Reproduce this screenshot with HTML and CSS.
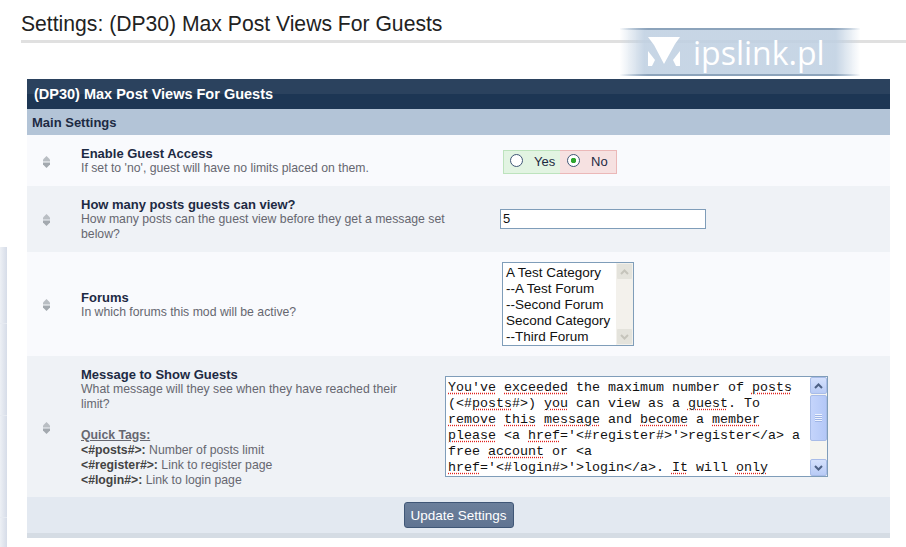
FILE: index.html
```html
<!DOCTYPE html>
<html lang="en">
<head>
    <meta charset="UTF-8">
    <title>Settings: (DP30) Max Post Views For Guests</title>
    <link rel="stylesheet" href="styles.css">
</head>
<body>
    <div class="side-panel"></div>

    <!-- watermark -->
    <div class="watermark">
        <svg class="watermark-logo" width="32" height="30" viewBox="0 0 32 30">
            <path d="M0 0H32L27 7L16 27L6 8Z" fill="#fff"/>
            <path d="M0 14L7 23L4 29H0Z" fill="#fff"/>
            <path d="M32 14L25 23L28 29H32Z" fill="#fff"/>
        </svg>
        <span>ipslink.pl</span>
    </div>

    <h1 class="page-title">Settings: (DP30) Max Post Views For Guests</h1>

    <form class="settings">
        <h2 class="settings-title">(DP30) Max Post Views For Guests</h2>
        <h3 class="settings-group">Main Settings</h3>

        <div class="row row-guest">
            <svg class="sort" width="9" height="14" viewBox="0 0 9 14"><path class="sort-up" d="M4.500 1L8 4.500V6.500H1V4.500Z"/><path class="sort-down" d="M1 7.500H8V9.500L4.500 13L1 9.500Z"/></svg>
            <div class="label">
                <strong>Enable Guest Access</strong>
                <p>If set to 'no', guest will have no limits placed on them.</p>
            </div>
            <div class="field">
                <div class="yesno">
                    <label class="yes"><span class="radio"></span>Yes</label>
                    <label class="no"><span class="radio checked"></span>No</label>
                </div>
            </div>
        </div>

        <div class="row row-alt row-posts">
            <svg class="sort" width="9" height="14" viewBox="0 0 9 14"><path class="sort-up" d="M4.500 1L8 4.500V6.500H1V4.500Z"/><path class="sort-down" d="M1 7.500H8V9.500L4.500 13L1 9.500Z"/></svg>
            <div class="label">
                <strong>How many posts guests can view?</strong>
                <p>How many posts can the guest view before they get a message set below?</p>
            </div>
            <div class="field">
                <div class="textbox">5</div>
            </div>
        </div>

        <div class="row row-forums">
            <svg class="sort" width="9" height="14" viewBox="0 0 9 14"><path class="sort-up" d="M4.500 1L8 4.500V6.500H1V4.500Z"/><path class="sort-down" d="M1 7.500H8V9.500L4.500 13L1 9.500Z"/></svg>
            <div class="label">
                <strong>Forums</strong>
                <p>In which forums this mod will be active?</p>
            </div>
            <div class="field">
                <div class="listbox">
                    <ul>
                        <li>A Test Category</li>
                        <li>--A Test Forum</li>
                        <li>--Second Forum</li>
                        <li>Second Category</li>
                        <li>--Third Forum</li>
                    </ul>
                    <div class="scroll scroll-off">
                        <span class="scroll-btn"><svg width="9" height="6" viewBox="0 0 9 6"><path d="M1 5L4.500 1.500L8 5" /></svg></span>
                        <span class="scroll-track"></span>
                        <span class="scroll-btn"><svg width="9" height="6" viewBox="0 0 9 6"><path d="M1 1L4.500 4.500L8 1" /></svg></span>
                    </div>
                </div>
            </div>
        </div>

        <div class="row row-alt row-message">
            <svg class="sort" width="9" height="14" viewBox="0 0 9 14"><path class="sort-up" d="M4.500 1L8 4.500V6.500H1V4.500Z"/><path class="sort-down" d="M1 7.500H8V9.500L4.500 13L1 9.500Z"/></svg>
            <div class="label">
                <strong>Message to Show Guests</strong>
                <p class="narrow">What message will they see when they have reached their limit?</p>
                <p class="tags">
                    <u class="tags-title">Quick Tags:</u><br>
                    <b>&lt;#posts#&gt;:</b> Number of posts limit<br>
                    <b>&lt;#register#&gt;:</b> Link to register page<br>
                    <b>&lt;#login#&gt;:</b> Link to login page
                </p>
            </div>
            <div class="field">
                <div class="memo">
                    <div class="memo-text">
                        <div><i>You've</i> <i>exceeded</i> the maximum number of <i>posts</i></div>
                        <div>(&lt;#<i>posts</i>#&gt;) <i>you</i> can view as a <i>guest</i>. To</div>
                        <div><i>remove</i> <i>this</i> <i>message</i> and <i>become</i> a <i>member</i></div>
                        <div><i>please</i> &lt;a <i>href</i>='&lt;#register#&gt;'&gt;register&lt;/a&gt; a</div>
                        <div>free <i>account</i> or &lt;a</div>
                        <div><i>href</i>='&lt;#login#&gt;'&gt;login&lt;/a&gt;. <i>It</i> will <i>only</i></div>
                    </div>
                    <div class="scroll scroll-on">
                        <span class="scroll-btn"><svg width="9" height="6" viewBox="0 0 9 6"><path d="M1 5L4.500 1.500L8 5" /></svg></span>
                        <span class="scroll-thumb"><span class="grip"></span></span>
                        <span class="scroll-track"></span>
                        <span class="scroll-btn"><svg width="9" height="6" viewBox="0 0 9 6"><path d="M1 1L4.500 4.500L8 1" /></svg></span>
                    </div>
                </div>
            </div>
        </div>

        <div class="actions">
            <button type="button" class="submit">Update Settings</button>
        </div>
    </form>
</body>
</html>
```

FILE: styles.css
```css
* {
    box-sizing: border-box;
}

body {
    margin: 0;
    height: 547px;
    overflow: hidden;
    background: #fff;
    font-family: "Liberation Sans", Arial, sans-serif;
    color: #1d2a43;
}

/* page heading */
.page-title {
    margin: 0 0 0 21px;
    height: 43px;
    padding-top: 12px;
    border-bottom: 3px solid #e0e0e0;
    font-size: 21.150px;
    line-height: 24px;
    font-weight: normal;
    color: #222;
}

.side-panel {
    position: absolute;
    left: 0;
    top: 247px;
    width: 7px;
    height: 300px;
    background:
        linear-gradient(#e6eaf1, #e6eaf1) 0 76px / 100% 1px no-repeat,
        linear-gradient(#e6eaf1, #e6eaf1) 0 168px / 100% 1px no-repeat,
        linear-gradient(#e6eaf1, #e6eaf1) 0 270px / 100% 1px no-repeat,
        linear-gradient(90deg, #edf0f5, #d6dce8);
}

.watermark {
    position: absolute;
    left: 620px;
    top: 28px;
    width: 240px;
    height: 48px;
    display: flex;
    align-items: center;
    padding-left: 28px;
    gap: 13px;
    background: linear-gradient(90deg, rgba(190, 207, 225, 0), rgba(190, 207, 225, 0.86) 10%, rgba(190, 207, 225, 0.86) 90%, rgba(190, 207, 225, 0));
    border-top: 2px solid;
    border-bottom: 2px solid;
    border-image: linear-gradient(90deg, rgba(140, 163, 187, 0), #8ca3bb 12%, #8ca3bb 88%, rgba(140, 163, 187, 0)) 1;
    color: #fff;
    font-family: "Open Sans", sans-serif;
    font-size: 32px;
}

.watermark-logo {
    flex: none;
}

/* settings block */
.settings {
    margin: 36px 16px 0 27px;
}

.settings-title {
    margin: 0;
    height: 30px;
    padding-left: 7px;
    background: linear-gradient(#2b425e 50%, #1d3654 50%);
    color: #fff;
    font-size: 14.500px;
    line-height: 30px;
}

.settings-group {
    margin: 0;
    height: 26px;
    padding-left: 5px;
    background: #b3c4d7;
    color: #1d2a43;
    font-size: 13px;
    line-height: 28px;
}

.row {
    display: grid;
    grid-template-columns: 54px 396px 1fr;
    align-items: center;
    background: #f9fafd;
}

.row-alt {
    background: #eff2f6;
}

.row-guest {
    height: 51px;
}

.row-posts {
    height: 66px;
}

.row-forums {
    height: 104px;
}

.row-message {
    height: 141px;
}

.sort {
    justify-self: start;
    margin: 2px 0 0 15px;
}

.sort-up {
    fill: #b9bec3;
}

.sort-down {
    fill: #a3a9af;
}

.label {
    padding-top: 1px;
    font-size: 12.250px;
    line-height: 15px;
    color: #666770;
}

.label strong {
    display: block;
    color: #1d2a43;
    font-size: 13px;
}

.label p {
    margin: 0;
    width: 375px;
}

.label .narrow {
    width: 330px;
}

.label .tags {
    margin-top: 16px;
}

.tags b {
    color: #444;
}

.tags-title {
    font-weight: bold;
    color: #666770;
}

.field {
    font-size: 12px;
}

/* yes / no */
.yesno {
    display: inline-flex;
    margin: 2px 0 0 26px;
    height: 24px;
    font-size: 13px;
    color: #1d2a43;
}

.yesno label {
    display: flex;
    align-items: center;
    border: 1px solid;
}

.yes {
    width: 57px;
    padding-left: 6px;
    gap: 11px;
    background: #e2f4e2;
    border-color: #bde3bd !important;
    border-right: 0 !important;
}

.no {
    width: 57px;
    padding-left: 7px;
    gap: 11px;
    background: #f6e1e1;
    border-color: #ebb8b8 !important;
    border-left: 0 !important;
}

.radio {
    width: 13px;
    height: 13px;
    margin-top: -3px;
    border: 1px solid #3f5676;
    border-radius: 50%;
    background: #fff;
}

.radio.checked {
    background: radial-gradient(circle, #2fa52f 2.500px, #fff 3px);
}

.textbox {
    margin-left: 23px;
    width: 206px;
    height: 20px;
    padding-left: 2px;
    background: #fff;
    border: 1px solid #7f9db9;
    font-size: 13px;
    line-height: 18px;
    color: #111;
}

.listbox {
    display: flex;
    margin-left: 25px;
    width: 132px;
    height: 84px;
    background: #fff;
    border: 1px solid #7f9db9;
}

.listbox ul {
    flex: 1;
    margin: 0;
    padding: 2px 0 0 3px;
    list-style: none;
    font-size: 13.500px;
    line-height: 16px;
    color: #111;
    white-space: nowrap;
}

/* scrollbars */
.scroll {
    display: flex;
    flex-direction: column;
    flex: none;
    width: 17px;
}

.scroll-btn {
    display: flex;
    align-items: center;
    justify-content: center;
    height: 17px;
    border-radius: 2px;
}

.scroll-btn svg {
    fill: none;
    stroke-width: 2;
}

.scroll-track {
    flex: 1;
}

.scroll-off {
    background: #f3f1ec;
}

.scroll-off .scroll-btn {
    background: #e4e3dc;
    border: 1px solid #f3f1ec;
}

.scroll-off svg {
    stroke: #c5c4bb;
}

.scroll-on {
    background: #f5f5f0;
}

.scroll-on .scroll-btn {
    background: linear-gradient(#d5e1fd, #b8cbf5);
    border: 1px solid #a8bce8;
}

.scroll-on svg {
    stroke: #4d6185;
}

.scroll-thumb {
    display: flex;
    align-items: center;
    justify-content: center;
    height: 46px;
    margin-top: 1px;
    border: 1px solid #a8bce8;
    border-radius: 2px;
    background: linear-gradient(90deg, #c4d4fb, #b4c8f7);
}

.grip {
    width: 7px;
    height: 8px;
    background: repeating-linear-gradient(#eef3fe 0 1px, #9fb5e6 1px 2px);
}

.memo {
    display: flex;
    margin-left: -32px;
    width: 383px;
    height: 101px;
    background: #fff;
    border: 1px solid #7f9db9;
}

.memo-text {
    flex: 1;
    padding: 3px 0 0 2px;
    font-family: "Liberation Mono", monospace;
    font-size: 13.330px;
    line-height: 16px;
    color: #111;
    white-space: nowrap;
}

/* spell check squiggle */
.memo-text i {
    font-style: normal;
    text-decoration: underline dotted #e0201c;
    text-underline-offset: 2px;
}

.actions {
    height: 41px;
    padding-top: 5px;
    text-align: center;
    background: #e3e9f1;
    border-bottom: 5px solid #d5dce4;
}

.submit {
    width: 110px;
    height: 26px;
    padding: 0;
    background: linear-gradient(#6b7f9b, #5f7391);
    border: 1px solid #3f5676;
    border-radius: 3px;
    color: #fff;
    font-family: "Liberation Sans", Arial, sans-serif;
    font-size: 13.500px;
}
```
